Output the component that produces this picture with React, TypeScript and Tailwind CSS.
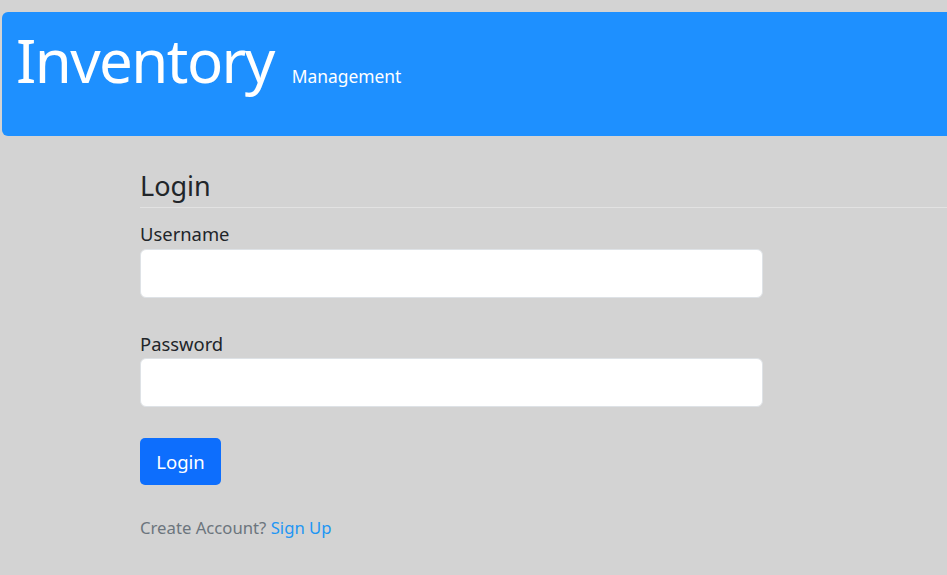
import React from "react";

export default function App() {
  return (
    <div className="min-h-[575px] w-full bg-[#d3d3d3] overflow-hidden pt-[12px]" style={{ fontFamily: '"Noto Sans", "Liberation Sans", sans-serif' }}>
      <header className="ml-[2px] h-[124px] rounded-l-[6px] bg-[#1e90ff] flex items-baseline pl-[14px] pt-[18px] text-white">
        <h1 className="text-[60px] leading-none font-normal tracking-[-1.6px]">Inventory</h1>
        <span className="ml-[18px] text-[17.4px] leading-none">Management</span>
      </header>
      <main className="pl-[140px] pt-[32px]">
        <h2 className="text-[27px] leading-[36px] text-[#212529] border-b border-[#e2e2e2] pb-[3px]">Login</h2>
        <form className="w-[623px] pt-[13px]" onSubmit={(e) => e.preventDefault()}>
          <label className="block text-[18.4px] leading-[26px] text-[#212529]">Username</label>
          <input type="text" className="block w-full h-[49px] mt-[2px] bg-white border border-[#dee2e6] rounded-[6px]" />
          <label className="block mt-[33px] text-[18.4px] leading-[26px] text-[#212529]">Password</label>
          <input type="password" className="block w-full h-[49px] mt-[1px] bg-white border border-[#dee2e6] rounded-[6px]" />
          <button type="submit" className="mt-[31px] w-[81px] h-[47px] bg-[#0d6efd] text-white text-[18.5px] rounded-[5px]">Login</button>
          <p className="mt-[30px] text-[16.7px] text-[#6c757d]">
            Create Account? <a href="#" className="text-[#2196f3]">Sign Up</a>
          </p>
        </form>
      </main>
    </div>
  );
}
